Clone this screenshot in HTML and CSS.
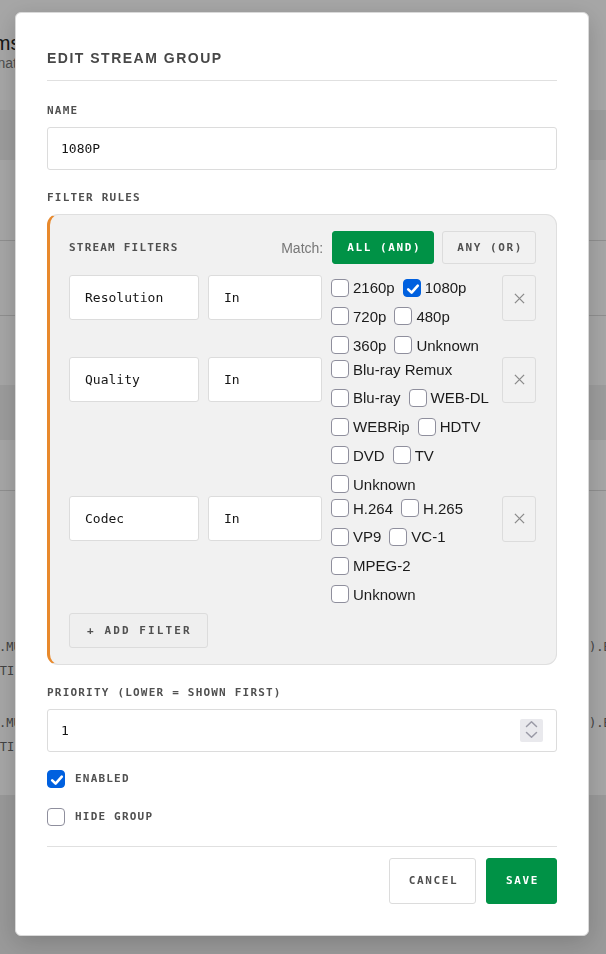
FILE: index.html
```html
<!DOCTYPE html>
<html lang="en">
<head>
<meta charset="utf-8">
<title>Edit stream group</title>
<link rel="stylesheet" href="styles.css">
</head>
<body>
<main class="page">
  <header class="page-head">
    <h1 class="page-title">Streams</h1>
    <p class="page-sub">Combinations</p>
  </header>
  <div class="band"></div>
  <div class="row row-a"></div>
  <div class="row row-b"></div>
  <div class="row row-c"></div>
  <div class="band band-b"></div>
  <div class="row row-d"></div>
  <section class="files">
    <div class="file">
      <div class="file-name"><span class="fn-1">1080p.MULTI</span><span class="fn-2">MULTI</span></div>
      <div class="file-src">).BluRay</div>
    </div>
    <div class="file">
      <div class="file-name"><span class="fn-1">2160p.MULTI</span><span class="fn-2">MULTI</span></div>
      <div class="file-src">).BluRay</div>
    </div>
  </section>
</main>

<div class="overlay">
  <form class="modal">
    <h2 class="modal-title">EDIT STREAM GROUP</h2>

    <div class="field field-first">
      <label class="label">NAME</label>
      <input class="input" type="text" value="1080P">
    </div>

    <div class="field">
      <div class="label">FILTER RULES</div>
      <div class="rules">
        <div class="rules-head">
          <span class="label label-inline">STREAM FILTERS</span>
          <div class="match">
            <span class="match-text">Match:</span>
            <button type="button" class="btn btn-match active">ALL (AND)</button>
            <button type="button" class="btn btn-match">ANY (OR)</button>
          </div>
        </div>

        <div class="filter-row">
          <div class="select">Resolution</div>
          <div class="select">In</div>
          <div class="options">
            <label class="opt"><span class="cb"></span>2160p</label>
            <label class="opt"><span class="cb on"><svg viewBox="0 0 18 18"><path d="M4.2 9.4 L7.6 12.6 L13.8 5.6"/></svg></span>1080p</label>
            <label class="opt"><span class="cb"></span>720p</label>
            <label class="opt"><span class="cb"></span>480p</label>
            <label class="opt"><span class="cb"></span>360p</label>
            <label class="opt"><span class="cb"></span>Unknown</label>
          </div>
          <button type="button" class="remove"><svg viewBox="0 0 12 12"><path d="M1 1 L11 11 M11 1 L1 11"/></svg></button>
        </div>

        <div class="filter-row">
          <div class="select">Quality</div>
          <div class="select">In</div>
          <div class="options">
            <label class="opt"><span class="cb"></span>Blu-ray Remux</label>
            <label class="opt"><span class="cb"></span>Blu-ray</label>
            <label class="opt"><span class="cb"></span>WEB-DL</label>
            <label class="opt"><span class="cb"></span>WEBRip</label>
            <label class="opt"><span class="cb"></span>HDTV</label>
            <label class="opt"><span class="cb"></span>DVD</label>
            <label class="opt"><span class="cb"></span>TV</label>
            <label class="opt"><span class="cb"></span>Unknown</label>
          </div>
          <button type="button" class="remove"><svg viewBox="0 0 12 12"><path d="M1 1 L11 11 M11 1 L1 11"/></svg></button>
        </div>

        <div class="filter-row">
          <div class="select">Codec</div>
          <div class="select">In</div>
          <div class="options">
            <label class="opt"><span class="cb"></span>H.264</label>
            <label class="opt"><span class="cb"></span>H.265</label>
            <label class="opt"><span class="cb"></span>VP9</label>
            <label class="opt"><span class="cb"></span>VC-1</label>
            <label class="opt"><span class="cb"></span>MPEG-2</label>
            <label class="opt"><span class="cb"></span>Unknown</label>
          </div>
          <button type="button" class="remove"><svg viewBox="0 0 12 12"><path d="M1 1 L11 11 M11 1 L1 11"/></svg></button>
        </div>

        <button type="button" class="btn add-filter">+ ADD FILTER</button>
      </div>
    </div>

    <div class="field">
      <label class="label">PRIORITY (LOWER = SHOWN FIRST)</label>
      <div class="num-input">
        <input class="num-value" type="text" value="1">
        <span class="spinner"><svg viewBox="0 0 23 23"><path d="M6.5 7.5 L11.5 2.8 L16.5 7.5 M6.5 13.5 L11.5 18.2 L16.5 13.5"/></svg></span>
      </div>
    </div>

    <label class="check-row check-first"><span class="cb on"><svg viewBox="0 0 18 18"><path d="M4.2 9.4 L7.6 12.6 L13.8 5.6"/></svg></span><span class="check-label">ENABLED</span></label>
    <label class="check-row"><span class="cb"></span><span class="check-label">HIDE GROUP</span></label>

    <footer class="modal-foot">
      <button type="button" class="btn btn-cancel">CANCEL</button>
      <button type="button" class="btn btn-save">SAVE</button>
    </footer>
  </form>
</div>
</body>
</html>
```

FILE: styles.css
```css
* { box-sizing: border-box; }

html, body {
  margin: 0;
  height: 100%;
}

body {
  font-family: "Liberation Sans", Arial, sans-serif;
  background: #ebebeb;
  overflow: hidden;
}

/* ---------- page behind the dialog ---------- */
.page {
  width: 606px;
  overflow: hidden;
}

.page-head {
  height: 110px;
  background: #fff;
  padding-top: 32px;
}

.page-title {
  margin: 0 0 0 -54px;
  font-size: 20px;
  line-height: 22px;
  font-weight: 400;
  color: #222;
}

.page-sub {
  margin: 0 0 0 -43px;
  font-size: 14px;
  line-height: 18px;
  color: #777;
}

.band {
  height: 50px;
  background: #f0f0f0;
}

.band-b { height: 55px; }

.row {
  background: #fff;
  border-bottom: 1px solid #dcdcdc;
}

.row-a { height: 81px; }
.row-b { height: 75px; }
.row-c { height: 69px; border-bottom: 0; }
.row-d { height: 51px; }

.files {
  height: 304px;
  background: #fff;
  padding-top: 144px;
  display: flex;
  flex-direction: column;
  gap: 28px;
  font-family: "DejaVu Sans Mono", monospace;
  font-size: 12px;
  line-height: 24px;
  color: #666;
}

.file {
  display: flex;
  justify-content: space-between;
  white-space: nowrap;
}

.file-name {
  display: flex;
  flex-direction: column;
}

.fn-1 { margin-left: -37px; }
.fn-2 { margin-left: -22px; }

.file-src {
  width: 17px;
  overflow: hidden;
}

/* ---------- dialog ---------- */
.overlay {
  position: fixed;
  inset: 0;
  background: rgba(0, 0, 0, 0.35);
  padding: 12px 0 0 15px;
}

.modal {
  width: 574px;
  background: #fff;
  border: 1px solid #d9d9d9;
  border-radius: 6px;
  padding: 35px 31px 31px;
  box-shadow: 0 6px 24px rgba(0, 0, 0, 0.18);
}

.modal-title {
  margin: 0;
  padding-bottom: 12px;
  border-bottom: 1px solid #e0e0e0;
  font-size: 14px;
  line-height: 20px;
  font-weight: 700;
  letter-spacing: 1.5px;
  color: #474747;
}

.field { margin-top: 21px; }
.field-first { margin-top: 23px; }

.label {
  display: block;
  margin-bottom: 9px;
  font-family: "DejaVu Sans Mono", monospace;
  font-size: 11px;
  line-height: 14px;
  font-weight: 700;
  letter-spacing: 1.2px;
  color: #505050;
}

.label-inline { margin: 0; }

.input {
  display: block;
  width: 100%;
  height: 43px;
  border: 1px solid #dcdcdc;
  border-radius: 3px;
  padding: 0 13px;
  font-family: "DejaVu Sans Mono", monospace;
  font-size: 13px;
  color: #151515;
  background: #fff;
  outline: none;
}

/* filter rule box */
.rules {
  background: #f1f1f1;
  border: 1px solid #dfdfdf;
  border-left: 3px solid #e8892c;
  border-radius: 11px;
  padding: 16px 20px 16px 19px;
}

.rules-head {
  display: flex;
  align-items: center;
  justify-content: space-between;
  margin-bottom: 11px;
}

.match {
  display: flex;
  align-items: center;
  gap: 8px;
}

.match-text {
  font-size: 14px;
  color: #777;
  margin-right: 1px;
}

.btn {
  font-family: "DejaVu Sans Mono", monospace;
  font-size: 11px;
  font-weight: 700;
  letter-spacing: 1.6px;
  border-radius: 3px;
  cursor: pointer;
}

.btn-match {
  height: 33px;
  padding: 0 12px 0 14px;
  border: 1px solid #dcdcdc;
  background: #f1f1f1;
  color: #505050;
}

.btn-match.active {
  background: #009246;
  border-color: #009246;
  color: #fff;
}

.filter-row {
  display: grid;
  grid-template-columns: 130px 114px 1fr 34px;
  column-gap: 9px;
  align-items: start;
}

.select {
  height: 45px;
  display: flex;
  align-items: center;
  padding: 0 15px;
  background: #fff;
  border: 1px solid #dcdcdc;
  border-radius: 3px;
  font-family: "DejaVu Sans Mono", monospace;
  font-size: 13px;
  color: #151515;
}

.options {
  display: flex;
  flex-wrap: wrap;
  column-gap: 8px;
  row-gap: 4.75px;
}

.opt {
  display: flex;
  align-items: center;
  gap: 4px;
  height: 24px;
  padding-top: 1px;
  font-size: 15px;
  color: #1b1b1b;
  white-space: nowrap;
}

.cb {
  flex: none;
  width: 18px;
  height: 18px;
  display: grid;
  place-items: center;
  background: #fff;
  border: 1px solid #8f8f9d;
  border-radius: 4px;
}

.cb.on {
  background: #0060df;
  border-color: #0060df;
}

.cb svg {
  width: 18px;
  height: 18px;
  fill: none;
  stroke: #fff;
  stroke-width: 2.6;
  stroke-linecap: round;
  stroke-linejoin: round;
}

.remove {
  height: 46px;
  padding: 0;
  display: grid;
  place-items: center;
  background: #f1f1f1;
  border: 1px solid #dcdcdc;
  border-radius: 3px;
  cursor: pointer;
}

.remove svg {
  width: 11px;
  height: 11px;
  stroke: #8a8a8a;
  stroke-width: 1.4;
  fill: none;
}

.add-filter {
  display: block;
  margin-top: 7px;
  height: 35px;
  padding: 0 15px 0 17px;
  letter-spacing: 2.1px;
  background: #efefef;
  border: 1px solid #dcdcdc;
  color: #505050;
}

/* number field */
.num-input {
  height: 43px;
  display: flex;
  align-items: center;
  padding: 0 13px;
  border: 1px solid #dcdcdc;
  border-radius: 3px;
  background: #fff;
}

.num-value {
  flex: 1;
  min-width: 0;
  border: 0;
  padding: 0;
  outline: none;
  font-family: "DejaVu Sans Mono", monospace;
  font-size: 13px;
  color: #151515;
  background: transparent;
}

.spinner {
  width: 23px;
  height: 23px;
  background: #e9e9ed;
  border-radius: 2px;
}

.spinner svg {
  display: block;
  width: 23px;
  height: 23px;
  fill: none;
  stroke: #9a9aa6;
  stroke-width: 1.5;
  stroke-linecap: round;
  stroke-linejoin: round;
}

/* toggles */
.check-row {
  display: flex;
  align-items: center;
  gap: 10px;
  margin-top: 20px;
}

.check-first { margin-top: 18px; }

.check-label {
  font-family: "DejaVu Sans Mono", monospace;
  font-size: 11px;
  font-weight: 700;
  letter-spacing: 1.2px;
  color: #505050;
}

/* footer */
.modal-foot {
  margin-top: 20px;
  padding-top: 11px;
  border-top: 1px solid #e0e0e0;
  display: flex;
  justify-content: flex-end;
  gap: 10px;
}

.btn-cancel,
.btn-save {
  height: 46px;
  padding: 0 17px 0 19px;
}

.btn-cancel {
  background: #fff;
  border: 1px solid #dcdcdc;
  color: #505050;
}

.btn-save {
  background: #009246;
  border: 1px solid #009246;
  color: #fff;
}
```
